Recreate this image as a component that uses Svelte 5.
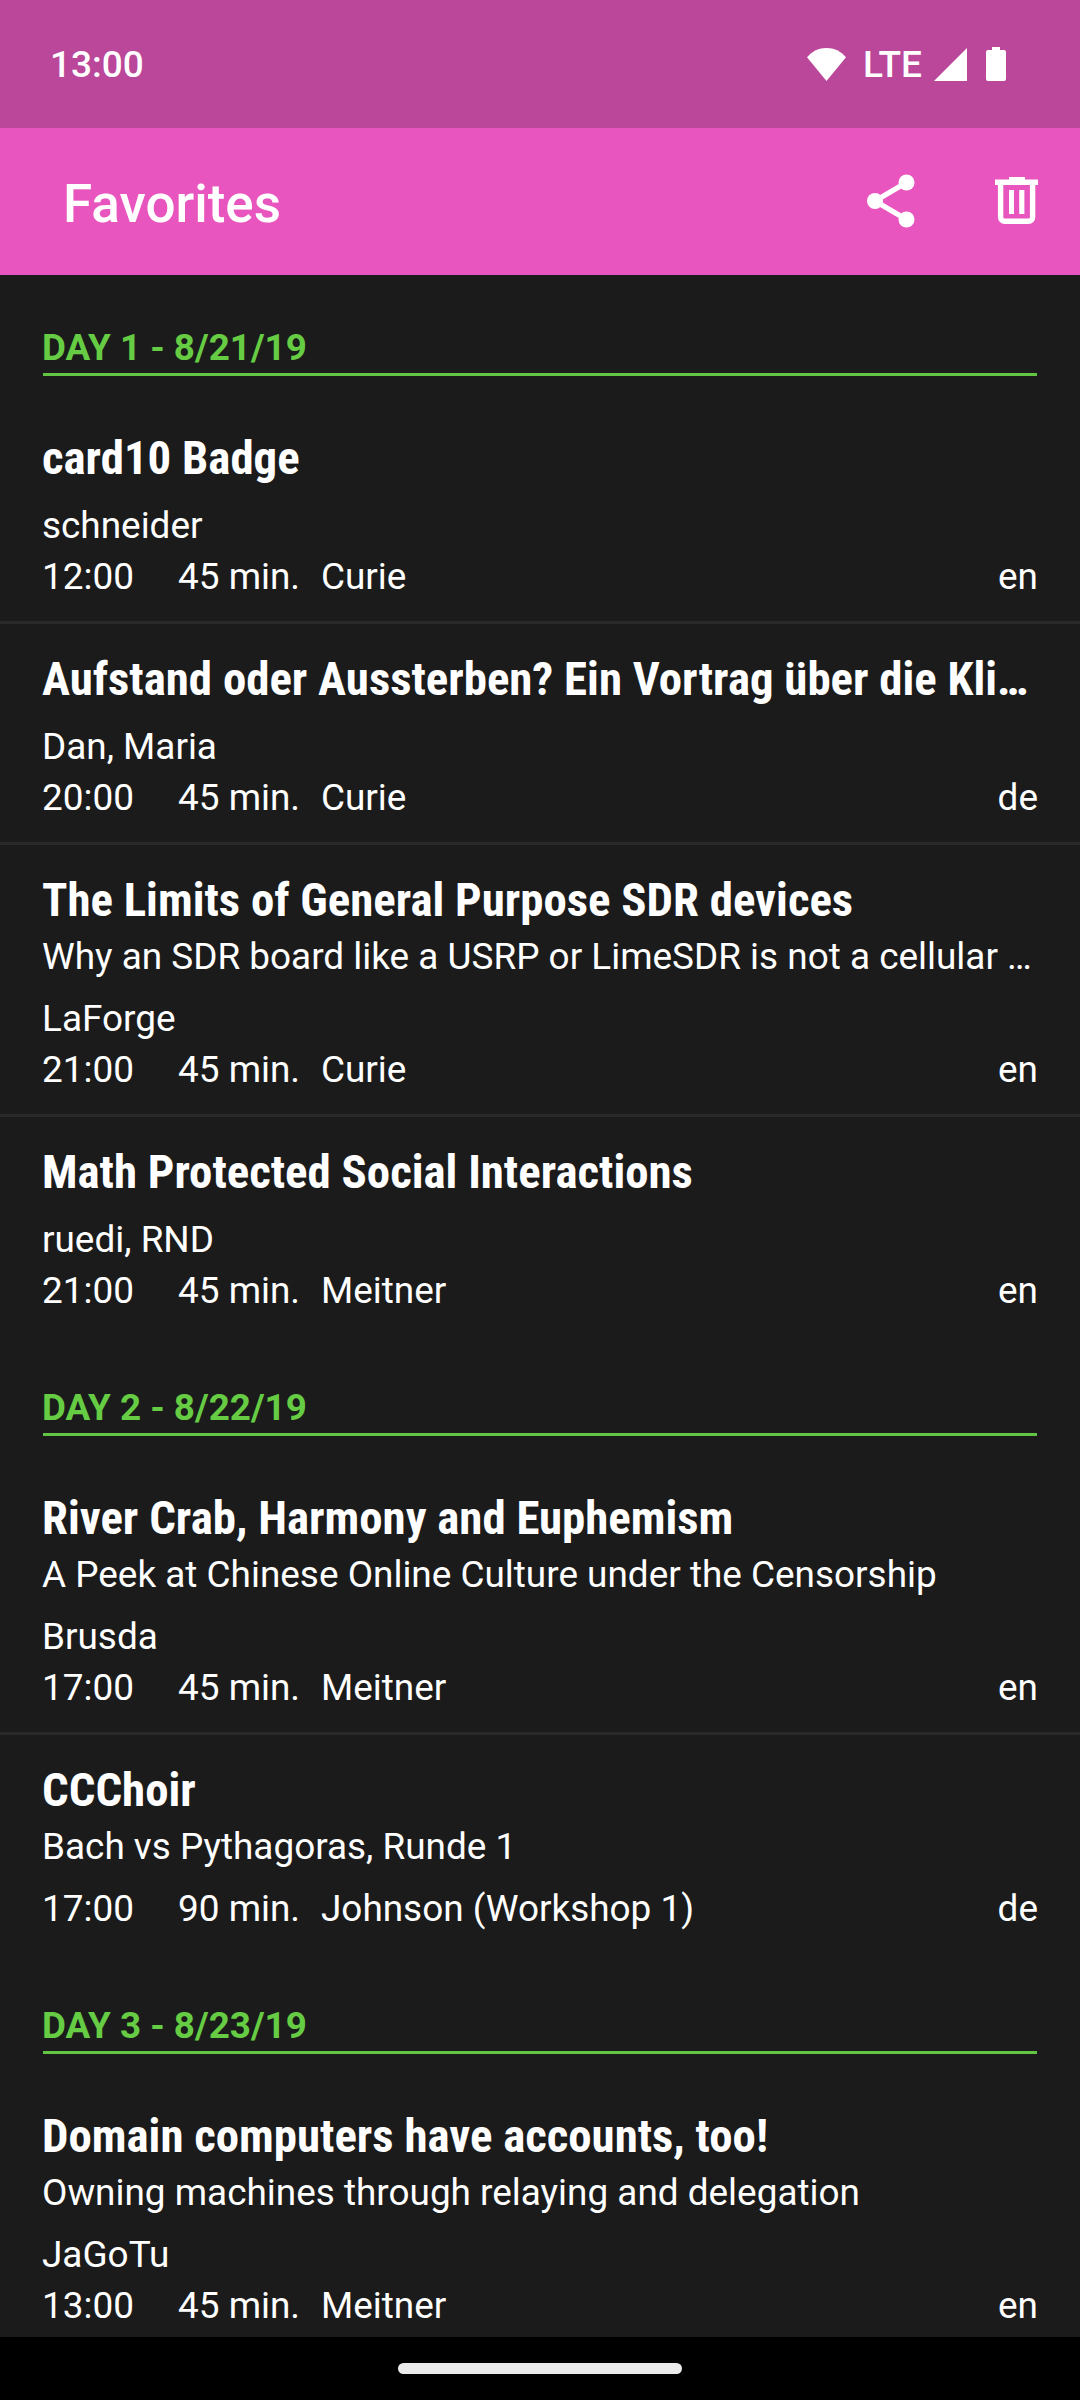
<script lang="ts">
  interface Session {
    title: string;
    subtitle?: string;
    speakers?: string;
    time: string;
    duration: number;
    room: string;
    language: string;
  }

  interface Day {
    label: string;
    sessions: Session[];
  }

  const days: Day[] = [
    {
      label: "Day 1 - 8/21/19",
      sessions: [
        {
          title: "card10 Badge",
          speakers: "schneider",
          time: "12:00",
          duration: 45,
          room: "Curie",
          language: "en",
        },
        {
          title: "Aufstand oder Aussterben? Ein Vortrag über die Kli…",
          speakers: "Dan, Maria",
          time: "20:00",
          duration: 45,
          room: "Curie",
          language: "de",
        },
        {
          title: "The Limits of General Purpose SDR devices",
          subtitle: "Why an SDR board like a USRP or LimeSDR is not a cellular …",
          speakers: "LaForge",
          time: "21:00",
          duration: 45,
          room: "Curie",
          language: "en",
        },
        {
          title: "Math Protected Social Interactions",
          speakers: "ruedi, RND",
          time: "21:00",
          duration: 45,
          room: "Meitner",
          language: "en",
        },
      ],
    },
    {
      label: "Day 2 - 8/22/19",
      sessions: [
        {
          title: "River Crab, Harmony and Euphemism",
          subtitle: "A Peek at Chinese Online Culture under the Censorship",
          speakers: "Brusda",
          time: "17:00",
          duration: 45,
          room: "Meitner",
          language: "en",
        },
        {
          title: "CCChoir",
          subtitle: "Bach vs Pythagoras, Runde 1",
          time: "17:00",
          duration: 90,
          room: "Johnson (Workshop 1)",
          language: "de",
        },
      ],
    },
    {
      label: "Day 3 - 8/23/19",
      sessions: [
        {
          title: "Domain computers have accounts, too!",
          subtitle: "Owning machines through relaying and delegation",
          speakers: "JaGoTu",
          time: "13:00",
          duration: 45,
          room: "Meitner",
          language: "en",
        },
      ],
    },
  ];
</script>

<div class="screen">
  <div class="status-bar">
    <span class="clock">13:00</span>
    <div class="status-icons">
      <svg class="wifi" width="39" height="33" viewBox="0 0 39 33" fill="currentColor">
        <path d="M19.5 33 0 9.3C5 3.2 12 0 19.5 0S34 3.2 39 9.3z" />
      </svg>
      <span class="network">LTE</span>
      <svg class="signal" width="33" height="33" viewBox="0 0 33 33" fill="currentColor">
        <path d="M33 0v33H0z" />
      </svg>
      <svg width="20" height="34" viewBox="0 0 20 34" fill="currentColor">
        <path d="M6 0h8v3h4a2 2 0 0 1 2 2v27a2 2 0 0 1-2 2H2a2 2 0 0 1-2-2V5a2 2 0 0 1 2-2h4z" />
      </svg>
    </div>
  </div>

  <header class="app-bar">
    <h1>Favorites</h1>
    <button class="action share" aria-label="Share">
      <svg width="48" height="54" viewBox="0 0 48 54" fill="currentColor">
        <path d="M39.5 8.5 8 27l31.5 18.5" fill="none" stroke="currentColor" stroke-width="5.3" />
        <circle cx="39.5" cy="8.5" r="8" />
        <circle cx="8" cy="27" r="8" />
        <circle cx="39.5" cy="45.5" r="8" />
      </svg>
    </button>
    <button class="action" aria-label="Delete all">
      <svg width="43" height="48" viewBox="0 0 43 48" fill="currentColor">
        <path d="M14 0h16v2.5h13V8H0V2.5h14z" />
        <path
          d="M5.6 7v33.3a4 4 0 0 0 4 4h24a4 4 0 0 0 4-4V7"
          fill="none"
          stroke="currentColor"
          stroke-width="5.4"
        />
        <path d="M14 13h5v24h-5zM24.2 13h5.2v24h-5.2z" />
      </svg>
    </button>
  </header>

  <main class="list">
    {#each days as day}
      <section>
        <h2 class="day">{day.label}</h2>
        {#each day.sessions as session}
          <article class="session">
            <h3 class="title">{session.title}</h3>
            {#if session.subtitle}
              <p class="subtitle">{session.subtitle}</p>
            {/if}
            {#if session.speakers}
              <p class="speakers">{session.speakers}</p>
            {/if}
            <div class="meta" class:spaced={!session.speakers}>
              <span class="time">{session.time}</span>
              <span class="duration">{session.duration} min.</span>
              <span class="room">{session.room}</span>
              <span>{session.language}</span>
            </div>
          </article>
        {/each}
      </section>
    {/each}
  </main>

  <div class="nav-bar">
    <div class="handle"></div>
  </div>
</div>

<style>
  :global(body) {
    margin: 0;
    background: #000;
  }

  .screen {
    display: flex;
    flex-direction: column;
    width: 1080px;
    height: 2400px;
    overflow: hidden;
    background: #1b1b1b;
    color: #fff;
    font-family: Roboto, sans-serif;
    font-size: 36.92px;
  }

  h1,
  h2,
  h3,
  p {
    margin: 0;
  }

  .status-bar {
    flex: none;
    display: flex;
    align-items: center;
    justify-content: space-between;
    box-sizing: border-box;
    height: 128px;
    padding: 0 74px 0 50px;
    background: #bb479a;
  }

  .clock,
  .network {
    padding-top: 2px;
    font-size: 37px;
    font-weight: 500;
    line-height: 44px;
  }

  .status-icons {
    display: flex;
    align-items: center;
  }

  .wifi {
    margin-right: 17px;
  }

  .network {
    margin-right: 12px;
  }

  .signal {
    margin-right: 19px;
  }

  .app-bar {
    flex: none;
    display: flex;
    align-items: center;
    box-sizing: border-box;
    height: 147px;
    padding: 0 42px 2px 63px;
    background: #e855be;
  }

  .app-bar h1 {
    flex: 1;
    padding-top: 6px;
    font-size: 53px;
    font-weight: 500;
    line-height: 64px;
  }

  .action {
    display: flex;
    padding: 0;
    border: none;
    background: none;
    color: inherit;
  }

  .share {
    margin-right: 80px;
  }

  .list {
    flex: 1;
    min-height: 0;
    overflow: hidden;
  }

  .day {
    margin: 0 43px 27px;
    padding: 50px 0 3px;
    border-bottom: 3px solid #62c544;
    color: #66cc44;
    font-size: 36.85px;
    font-weight: 700;
    line-height: 45px;
    text-indent: -1px;
    text-transform: uppercase;
  }

  .session {
    padding: 27px 42px 19px;
  }

  .session + .session {
    border-top: 3px solid #292929;
  }

  .title {
    font-family: "Roboto Condensed", Roboto, sans-serif;
    font-size: 46.85px;
    font-weight: 700;
    line-height: 56px;
    white-space: nowrap;
  }

  .subtitle {
    margin-top: 6px;
    line-height: 45px;
    white-space: nowrap;
  }

  .speakers,
  .meta.spaced {
    margin-top: 14px;
  }

  .speakers,
  .meta {
    line-height: 51px;
  }

  .meta {
    display: flex;
  }

  .time {
    width: 136px;
  }

  .duration {
    width: 143px;
  }

  .room {
    flex: 1;
  }

  .nav-bar {
    flex: none;
    display: flex;
    align-items: center;
    justify-content: center;
    height: 63px;
    background: #000;
  }

  .handle {
    width: 284px;
    height: 11px;
    border-radius: 6px;
    background: #ebebeb;
  }
</style>
